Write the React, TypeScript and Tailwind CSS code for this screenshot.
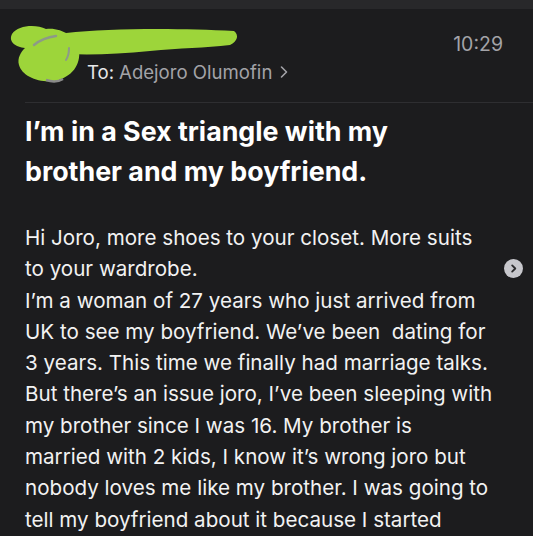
const title = ["I’m in a Sex triangle with my", "brother and my boyfriend."]

const body = [
  "Hi Joro, more shoes to your closet. More suits",
  "to your wardrobe.",
  "I’m a woman of 27 years who just arrived from",
  "UK to see my boyfriend. We’ve been \u00a0dating for",
  "3 years. This time we finally had marriage talks.",
  "But there’s an issue joro, I’ve been sleeping with",
  "my brother since I was 16. My brother is",
  "married with 2 kids, I know it’s wrong joro but",
  "nobody loves me like my brother. I was going to",
  "tell my boyfriend about it because I started",
]

export default function App() {
  return (
    <div className="min-h-[536px] w-full bg-[#1c1c1e] font-['Inter','Liberation_Sans',sans-serif] text-[#f2f2f2]">
      <div className="h-[9px] bg-[#28282a]" />

      <header className="relative ml-[25px] flex flex-col gap-[4px] border-b border-[#2e2e31] pb-[18px] pt-[23px] pr-[30px]">
        {/* green scribble covering the sender */}
        <svg className="absolute left-[-25px] top-[11px]" width="240" height="65" viewBox="0 0 240 65">
          <path d="M12 14 C 18 5, 36 4, 46 9 C 60 7, 77 16, 79 30 C 81 45, 72 57, 55 61 C 38 63, 22 56, 19 45 C 17 38, 21 32, 25 28 C 16 27, 8 22, 12 14 Z" fill="#9dd53a" />
          <path d="M66 13 C 110 8, 180 8, 234 11 C 239 15, 238 21, 230 25 C 205 28, 180 28, 150 31 C 120 34, 92 35, 68 34 Z" fill="#9dd53a" />
          <path d="M34 25 C 40 20, 48 17, 56 16" stroke="#8d9a88" strokeWidth="2.5" fill="none" strokeLinecap="round" />
          <path d="M69 28 C 69 33, 68 37, 66 40" stroke="#8d9a88" strokeWidth="2" fill="none" strokeLinecap="round" />
          <path d="M46 60 C 52 62, 58 62, 63 59" stroke="#8a8a8a" strokeWidth="2.5" fill="none" />
        </svg>

        <div className="flex justify-end">
          <span className="text-[19.5px] leading-[24px] text-[#a3a3a8]">10:29</span>
        </div>
        <div className="flex items-center gap-[5px] pl-[62px] text-[18.6px] leading-[24px]">
          <span className="text-[#e8e8ea]">To:</span>
          <span className="text-[#a3a3a8]">Adejoro Olumofin</span>
          <svg width="10" height="14" viewBox="0 0 10 14" className="ml-[2px]">
            <path d="M2.5 2 L7.5 7 L2.5 12" stroke="#a3a3a8" strokeWidth="1.6" fill="none" strokeLinecap="round" strokeLinejoin="round" />
          </svg>
        </div>
      </header>

      <main className="relative flex flex-col gap-[31px] px-[25px] pt-[8px]">
        <h1 className="text-[26.8px] font-bold leading-[40px] text-white">
          {title.map((line) => (
            <div key={line} className="whitespace-nowrap">{line}</div>
          ))}
        </h1>

        <div className="text-[20.6px] leading-[31.3px]">
          {body.map((line) => (
            <div key={line} className="whitespace-nowrap">{line}</div>
          ))}
        </div>

        <span className="absolute right-[10px] top-[156px] flex h-[19px] w-[19px] items-center justify-center rounded-full bg-[#c7c7cc]">
          <svg width="9" height="9" viewBox="0 0 10 10">
            <path d="M3.5 1.5 L7 5 L3.5 8.5" stroke="#2a2a2c" strokeWidth="2" fill="none" strokeLinecap="round" strokeLinejoin="round" />
          </svg>
        </span>
      </main>
    </div>
  )
}
